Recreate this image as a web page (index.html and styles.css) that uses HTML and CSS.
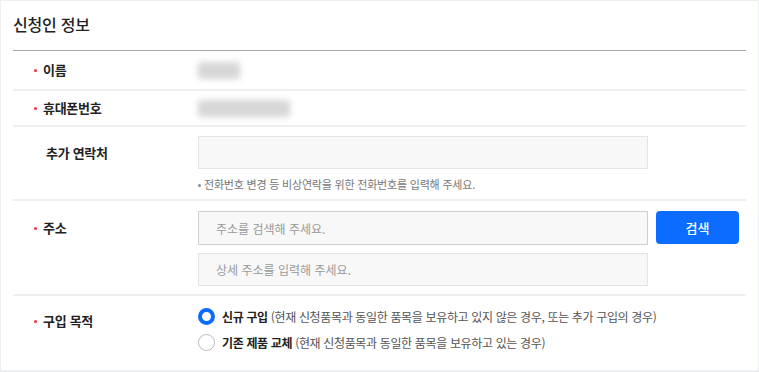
FILE: index.html
```html
<!DOCTYPE html>
<html lang="ko">
<head>
    <meta charset="UTF-8">
    <meta name="viewport" content="width=device-width, initial-scale=1.0">
    <title>신청인 정보</title>
    <link rel="stylesheet" href="styles.css">
</head>
<body>
    <div class="panel">
        <h2 class="title">신청인 정보</h2>

        <div class="row row-name">
            <div class="label required">이름</div>
            <div class="field"><span class="masked masked-short"></span></div>
        </div>

        <div class="row row-phone">
            <div class="label required">휴대폰번호</div>
            <div class="field"><span class="masked masked-long"></span></div>
        </div>

        <div class="row row-extra">
            <div class="label plain">추가 연락처</div>
            <div class="field">
                <input class="text-input" type="text">
                <p class="help">전화번호 변경 등 비상연락을 위한 전화번호를 입력해 주세요.</p>
            </div>
        </div>

        <div class="row row-address">
            <div class="label required">주소</div>
            <div class="field">
                <div class="search-line">
                    <input class="text-input strong" type="text" placeholder="주소를 검색해 주세요.">
                    <button class="search-btn">검색</button>
                </div>
                <input class="text-input" type="text" placeholder="상세 주소를 입력해 주세요.">
            </div>
        </div>

        <div class="row row-purpose">
            <div class="label required">구입 목적</div>
            <div class="field radios">
                <label class="radio checked">
                    <span class="dot"></span>
                    <b>신규 구입</b>&nbsp;<span class="note">(현재 신청품목과 동일한 품목을 보유하고 있지 않은 경우, 또는 추가 구입의 경우)</span>
                </label>
                <label class="radio">
                    <span class="dot"></span>
                    <b>기존 제품 교체</b>&nbsp;<span class="note">(현재 신청품목과 동일한 품목을 보유하고 있는 경우)</span>
                </label>
            </div>
        </div>
    </div>
</body>
</html>
```

FILE: styles.css
```css
* {
    margin: 0;
    padding: 0;
    box-sizing: border-box;
}
body {
    font-family: "Noto Sans CJK KR", "Noto Sans", sans-serif;
    background: #fff;
    color: #222;
}
.panel {
    width: 759px;
    height: 372px;
    border: 1px solid #eceef1;
    border-bottom: 2px solid #eeeff1;
    padding: 0 12px;
    background: #fff;
}
.title {
    font-size: 16px;
    font-weight: 500;
    height: 50px;
    line-height: 47px;
    border-bottom: 1px solid #a6a6a6;
    letter-spacing: -0.2px;
}
.row {
    display: flex;
    border-bottom: 2px solid #efefef;
}
.row:last-child {
    border-bottom: none;
}
.label {
    width: 185px;
    flex-shrink: 0;
    font-size: 13px;
    font-weight: 700;
    padding-left: 30px;
    letter-spacing: -0.3px;
}
.label.plain {
    padding-left: 33px;
}
.label.required::before {
    content: "";
    display: inline-block;
    width: 3px;
    height: 3px;
    margin: 0 6px 0 -9px;
    vertical-align: middle;
    position: relative;
    top: -1px;
    border-radius: 50%;
    background: #ff2b3a;
}
.field {
    flex: 1;
}

.row-name {
    height: 40px;
    align-items: center;
}
.row-name .label, .row-phone .label {
    line-height: 20px;
}
.row-phone {
    height: 36px;
    align-items: center;
}
.masked {
    display: block;
    height: 17px;
    background: #d6d6d6;
    filter: blur(3px);
    border-radius: 3px;
}
.masked-short { width: 42px; }
.masked-long { width: 92px; }

.row-extra {
    height: 74px;
    padding-top: 9px;
}
.row-extra .label,
.row-address .label {
    line-height: 33px;
}
.text-input {
    display: block;
    width: 450px;
    height: 33px;
    border: 1px solid #e4e4e4;
    background: #f8f8f8;
    padding: 0 17px;
    font-family: inherit;
    font-size: 12px;
    color: #333;
    outline: none;
}
.text-input.strong {
    border-color: #d0d0d0;
}
.text-input::placeholder {
    color: #9a9a9a;
}
.help {
    font-size: 11px;
    color: #777;
    margin-top: 7px;
    letter-spacing: -0.2px;
}
.help::before {
    content: "";
    display: inline-block;
    width: 3px;
    height: 3px;
    background: #888;
    border-radius: 50%;
    vertical-align: middle;
    margin: -2px 3px 0 0;
}

.row-address {
    height: 95px;
    padding-top: 10px;
}
.search-line {
    display: flex;
    gap: 8px;
    margin-bottom: 8px;
}
.search-line .text-input {
    height: 34px;
}
.search-btn {
    width: 83px;
    height: 33px;
    background: #0b6cff;
    color: #fff;
    border: none;
    border-radius: 4px;
    font-family: inherit;
    font-size: 13px;
    font-weight: 500;
}

.row-purpose {
    height: 73px;
    padding-top: 10px;
}
.row-purpose .label {
    line-height: 20px;
    padding-top: 5px;
}
.radios {
    display: flex;
    flex-direction: column;
    gap: 6px;
}
.radio {
    display: flex;
    align-items: center;
    height: 20px;
    font-size: 12px;
    color: #222;
    letter-spacing: -0.35px;
}
.radio b {
    font-weight: 700;
}
.radio .note {
    color: #555;
}
.dot {
    width: 17px;
    height: 17px;
    border-radius: 50%;
    border: 1px solid #b8b8b8;
    background: #fff;
    margin-right: 7px;
    flex-shrink: 0;
}
.radio.checked .dot {
    border: 4px solid #0b6cff;
}
```
